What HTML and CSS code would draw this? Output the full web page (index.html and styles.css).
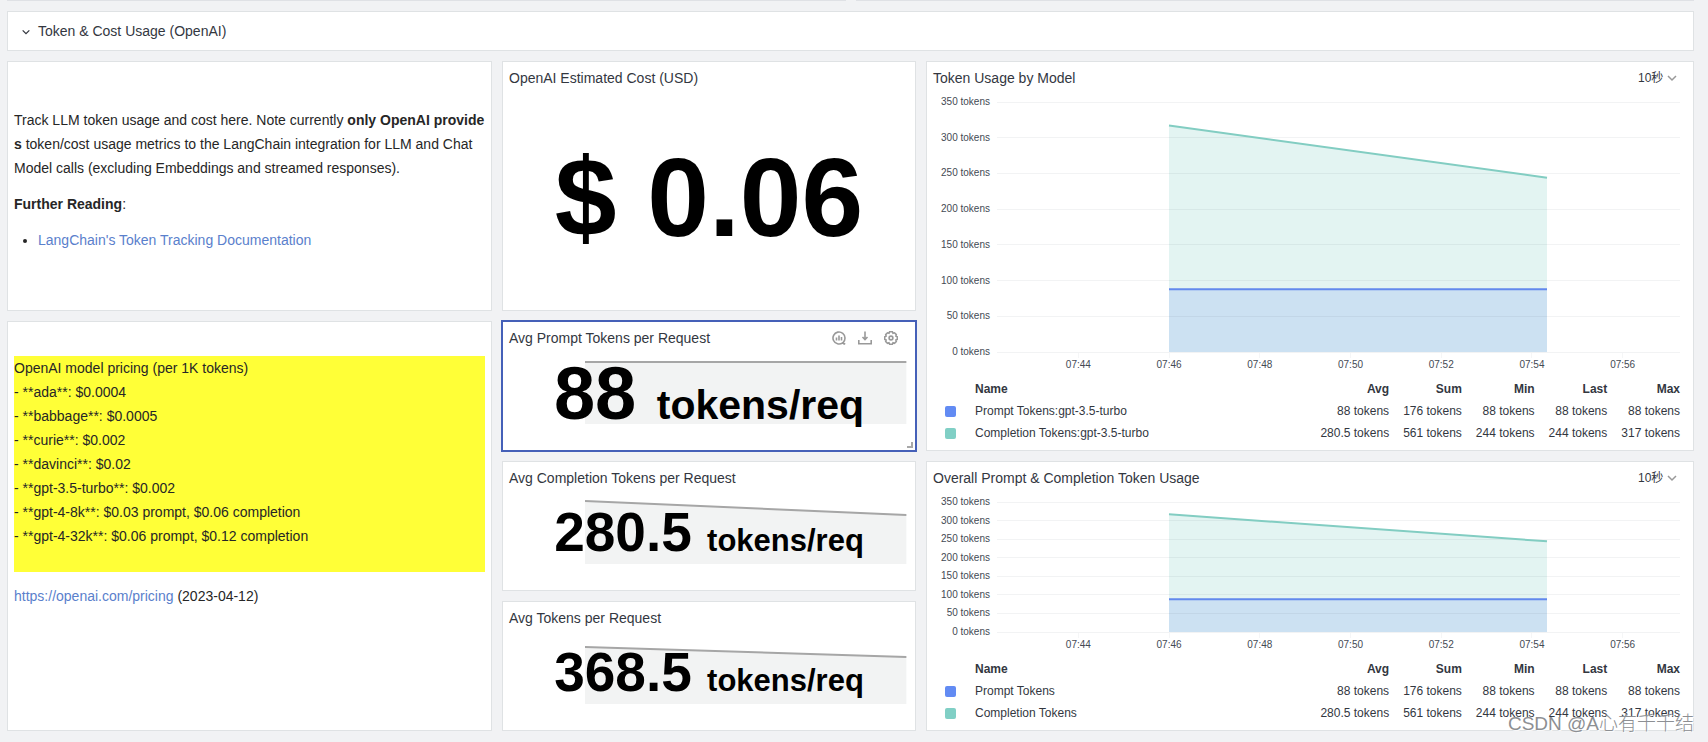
FILE: index.html
```html
<!DOCTYPE html>
<html lang="en">
<head>
<meta charset="utf-8">
<title>Token &amp; Cost Usage</title>
<link rel="stylesheet" href="styles.css">
</head>
<body>
<svg class="defs" aria-hidden="true">
  <symbol id="chevron" viewBox="0 0 12 12"><path d="M2 4l4 4 4-4" fill="none" stroke="currentColor" stroke-width="1.5"/></symbol>
  <symbol id="usage" viewBox="0 0 683 350" preserveAspectRatio="none">
    <path class="area-green" d="M172 33L550 106V350H172z"/>
    <path class="area-blue" d="M172 262H550V350H172z"/>
    <path class="gridline" d="M0 0H683M0 50H683M0 100H683M0 150H683M0 200H683M0 250H683M0 300H683M0 350H683"/>
    <path class="line-green" d="M172 33L550 106"/>
    <path class="line-blue" d="M172 262H550"/>
  </symbol>
</svg>
<main class="page">
  <div class="previous"><span></span><span></span></div>
  <header class="section">
    <button class="section-toggle" type="button"><svg class="icon-small"><use href="#chevron"/></svg>Token &amp; Cost Usage (OpenAI)</button>
  </header>
  <div class="board">
    <section class="panel note intro">
      <p>Track LLM token usage and cost here. Note currently <strong>only OpenAI provides</strong> token/cost usage metrics to the LangChain integration for LLM and Chat Model calls (excluding Embeddings and streamed responses).</p>
      <p><strong>Further Reading</strong>:</p>
      <ul><li><a href="#docs">LangChain's Token Tracking Documentation</a></li></ul>
    </section>
    <section class="panel note pricing">
      <pre class="prices">OpenAI model pricing (per 1K tokens)
- **ada**: $0.0004
- **babbage**: $0.0005
- **curie**: $0.002
- **davinci**: $0.02
- **gpt-3.5-turbo**: $0.002
- **gpt-4-8k**: $0.03 prompt, $0.06 completion
- **gpt-4-32k**: $0.06 prompt, $0.12 completion
</pre>
      <p><a href="#pricing">https://openai.com/pricing</a> (2023-04-12)</p>
    </section>

    <section class="panel stat cost">
      <div class="panel-head"><h2>OpenAI Estimated Cost (USD)</h2></div>
      <div class="stat-body"><p class="value huge">$ 0.06</p></div>
    </section>
    <section class="panel stat selected">
      <div class="panel-head">
        <h2>Avg Prompt Tokens per Request</h2>
        <div class="tools">
          <button type="button" aria-label="Analyze"><svg viewBox="0 0 14 14"><path d="M12 13.200L10.600 11.800A6 6 0 1 1 13 7a6 6 0 0 1-1.700 4.200M10.600 11.800l2.600 1.400M4.500 6.500v3M7 4.500v5M9.500 6v3.500"/></svg></button>
          <button type="button" aria-label="Download"><svg viewBox="0 0 14 14"><path d="M7 .5v8M4.500 6L7 8.500 9.500 6M.8 9v3.800h12.400V9"/></svg></button>
          <button type="button" aria-label="Settings"><svg viewBox="0 0 14 14"><circle cx="7" cy="7" r="1.900"/><path d="M5.600.8h2.800l.6 1.400 1.500-.4 1.800 1.800-.4 1.500 1.400.6v2.800l-1.400.5.4 1.500-1.800 1.800-1.500-.5-.6 1.400H5.600L5 11.800l-1.500.5-1.800-1.800.4-1.500L.7 8.500V5.700l1.400-.6-.4-1.500 1.800-1.800 1.500.4z"/></svg></button>
        </div>
      </div>
      <div class="stat-body">
        <svg class="spark" viewBox="0 0 100 68" preserveAspectRatio="none"><path class="spark-area" d="M0 6H100V68H0z"/><path class="spark-line" d="M0 6H100"/></svg>
        <p class="value large">88 <small>tokens/req</small></p>
      </div>
      <span class="resize"></span>
    </section>
    <section class="panel stat">
      <div class="panel-head"><h2>Avg Completion Tokens per Request</h2></div>
      <div class="stat-body">
        <svg class="spark" viewBox="0 0 100 68" preserveAspectRatio="none"><path class="spark-area" d="M0 5L100 19V68H0z"/><path class="spark-line" d="M0 5L100 19"/></svg>
        <p class="value medium">280.5 <small>tokens/req</small></p>
      </div>
    </section>
    <section class="panel stat">
      <div class="panel-head"><h2>Avg Tokens per Request</h2></div>
      <div class="stat-body">
        <svg class="spark" viewBox="0 0 100 68" preserveAspectRatio="none"><path class="spark-area" d="M0 11L100 21V68H0z"/><path class="spark-line" d="M0 11L100 21"/></svg>
        <p class="value medium">368.5 <small>tokens/req</small></p>
      </div>
    </section>

    <section class="panel graph by-model">
      <div class="panel-head"><h2>Token Usage by Model</h2>
        <div class="interval"><select aria-label="Interval"><option>10秒</option></select><svg class="icon"><use href="#chevron"/></svg></div></div>
      <div class="chart">
        <div class="y-axis"><span>350 tokens</span><span>300 tokens</span><span>250 tokens</span><span>200 tokens</span><span>150 tokens</span><span>100 tokens</span><span>50 tokens</span><span>0 tokens</span></div>
        <div class="plot"><svg><use href="#usage"/></svg></div>
        <div class="x-axis"><span>07:44</span><span>07:46</span><span>07:48</span><span>07:50</span><span>07:52</span><span>07:54</span><span>07:56</span></div>
      </div>
      <table class="legend">
        <tr><th></th><th>Name</th><th>Avg</th><th>Sum</th><th>Min</th><th>Last</th><th>Max</th></tr>
        <tr><td><i class="swatch blue"></i></td><td>Prompt Tokens:gpt-3.5-turbo</td><td>88 tokens</td><td>176 tokens</td><td>88 tokens</td><td>88 tokens</td><td>88 tokens</td></tr>
        <tr><td><i class="swatch green"></i></td><td>Completion Tokens:gpt-3.5-turbo</td><td>280.5 tokens</td><td>561 tokens</td><td>244 tokens</td><td>244 tokens</td><td>317 tokens</td></tr>
      </table>
    </section>
    <section class="panel graph overall">
      <div class="panel-head"><h2>Overall Prompt &amp; Completion Token Usage</h2>
        <div class="interval"><select aria-label="Interval"><option>10秒</option></select><svg class="icon"><use href="#chevron"/></svg></div></div>
      <div class="chart">
        <div class="y-axis"><span>350 tokens</span><span>300 tokens</span><span>250 tokens</span><span>200 tokens</span><span>150 tokens</span><span>100 tokens</span><span>50 tokens</span><span>0 tokens</span></div>
        <div class="plot"><svg><use href="#usage"/></svg></div>
        <div class="x-axis"><span>07:44</span><span>07:46</span><span>07:48</span><span>07:50</span><span>07:52</span><span>07:54</span><span>07:56</span></div>
      </div>
      <table class="legend">
        <tr><th></th><th>Name</th><th>Avg</th><th>Sum</th><th>Min</th><th>Last</th><th>Max</th></tr>
        <tr><td><i class="swatch blue"></i></td><td>Prompt Tokens</td><td>88 tokens</td><td>176 tokens</td><td>88 tokens</td><td>88 tokens</td><td>88 tokens</td></tr>
        <tr><td><i class="swatch green"></i></td><td>Completion Tokens</td><td>280.5 tokens</td><td>561 tokens</td><td>244 tokens</td><td>244 tokens</td><td>317 tokens</td></tr>
      </table>
    </section>
  </div>
  <div class="watermark">CSDN @A心有千千结</div>
</main>
</body>
</html>
```
FILE: styles.css
```css
* { box-sizing: border-box; }
body {
  margin: 0;
  background: #f1f2f4;
  color: #262626;
  font: 14px/24px "Liberation Sans", "Noto Sans CJK SC", sans-serif;
}
h2, p, pre, ul { margin: 0; font: inherit; }
button { border: 0; padding: 0; background: none; color: inherit; font: inherit; }
a { color: #5a80cc; text-decoration: none; }
.defs { display: none; }

.page { position: relative; padding: 0 14px 11px 7px; }
.previous { display: grid; grid-template-columns: 1fr 1fr; gap: 10px; height: 11px; }
.previous span { height: 1px; background: #dfe1e5; }

.section {
  display: flex;
  align-items: center;
  height: 40px;
  margin-bottom: 10px;
  padding: 0 13px;
  background: #fff;
  border: 1px solid #dfe2e4;
  color: #33373f;
}
.section-toggle { display: flex; align-items: center; gap: 7px; }
.icon-small { width: 10px; height: 10px; margin-top: 2px; }

.board {
  display: grid;
  grid-template-columns: 485fr 414fr 768fr;
  grid-template-rows: 250px repeat(3, 130px);
  grid-auto-flow: column;
  gap: 10px;
}
.panel {
  position: relative;
  display: flex;
  flex-direction: column;
  min-width: 0;
  background: #fff;
  border: 1px solid #dfe2e4;
}
.pricing { grid-row: 2 / 5; }
.by-model { grid-row: 1 / 3; }
.overall { grid-row: 3 / 5; }

.note { padding: 34px 6px 0; word-break: break-all; }
.note p { margin: 12px 0 0; }
.note ul { margin: 12px 0; padding-left: 24px; }
.prices { height: 216px; background: #ffff37; white-space: pre-wrap; }

.panel-head {
  display: flex;
  flex-shrink: 0;
  justify-content: space-between;
  align-items: center;
  height: 32px;
  padding: 0 17px 0 6px;
  color: #33373f;
}
.tools { display: flex; gap: 12px; color: #999; }
.tools button { width: 14px; height: 14px; }
.tools svg { display: block; width: 14px; height: 14px; fill: none; stroke: currentColor; stroke-width: 1.6; }

.stat-body { flex: 1; display: grid; padding-bottom: 20px; }
.cost .stat-body { padding-bottom: 8px; }
.selected .stat-body { padding-bottom: 16px; }
.stat-body > * { grid-area: 1 / 1; }
.value { align-self: center; justify-self: center; color: #000; font-weight: bold; line-height: 1; white-space: nowrap; }
.huge { font-size: 111px; }
.large { font-size: 74px; }
.medium { font-size: 55px; }
.large small { font-size: 41px; }
.medium small { font-size: 31px; }
.spark { width: 78%; height: 68px; margin: 2px 0 0 20%; }
.spark-area { fill: #f2f3f3; }
.spark-line { fill: none; stroke: #a6a6a6; stroke-width: 2; vector-effect: non-scaling-stroke; }
.selected { border-color: #4560b8; box-shadow: 0 0 0 1px #4560b8; }
.resize { position: absolute; right: 2px; bottom: 2px; width: 6px; height: 6px; border: solid #a8a8a8; border-width: 0 2px 2px 0; }

.graph { padding-bottom: 6px; }
.graph .panel-head { padding-right: 15px; }
.interval { display: flex; align-items: center; gap: 2px; color: #999; }
.interval select { appearance: none; border: 0; padding: 0; background: none; color: #33373f; font: 12px/20px "Liberation Sans", "Noto Sans CJK SC", sans-serif; }
.icon { width: 12px; height: 12px; }

.chart {
  flex: 1 1 0;
  min-height: 0;
  display: grid;
  grid-template: minmax(0, 1fr) 26px / 63px 1fr;
  column-gap: 7px;
  padding: 8px 13px 0 0;
  font-size: 10px;
  line-height: 12px;
  color: #444a54;
}
.y-axis { display: flex; flex-direction: column; justify-content: space-between; align-items: flex-end; margin: -6px 0; }
.plot { min-height: 0; }
.plot svg { display: block; width: 100%; height: 100%; overflow: visible; }
#usage { overflow: visible; }
#usage path { fill: none; vector-effect: non-scaling-stroke; }
#usage .area-green { fill: #e3f4f2; }
#usage .area-blue { fill: #cce1f2; }
#usage .gridline { stroke: rgba(40, 50, 60, 0.06); shape-rendering: crispEdges; }
#usage .line-green { stroke: #82cdc2; stroke-width: 2; }
#usage .line-blue { stroke: #6289ed; stroke-width: 2; }
.x-axis { grid-column: 2; display: flex; padding: 0 12px 0 36px; text-align: center; }
.x-axis span { flex: 1; }
.x-axis span::before { content: ""; display: block; width: 1px; height: 5px; margin: 1px auto; background: #f5f6f7; }

.legend { margin: 0 13px 0 18px; border-spacing: 0; font-size: 12px; line-height: 22px; color: #33373f; }
.legend td, .legend th { height: 22px; padding: 0 0 0 14px; text-align: right; white-space: nowrap; }
.legend td:first-child, .legend th:first-child { min-width: 30px; padding: 0; text-align: left; }
.legend td:nth-child(2), .legend th:nth-child(2) { width: 100%; padding: 0; text-align: left; }
.swatch { display: block; width: 11px; height: 11px; border-radius: 2px; }
.blue { background: #628bf3; }
.green { background: #80cfc5; }

.watermark {
  position: absolute;
  right: 14px;
  bottom: 3px;
  color: #8d8f93;
  font-size: 19px;
  font-weight: 300;
  line-height: 30px;
  text-shadow: 1px 1px 0 rgba(255, 255, 255, 0.8);
}
```
